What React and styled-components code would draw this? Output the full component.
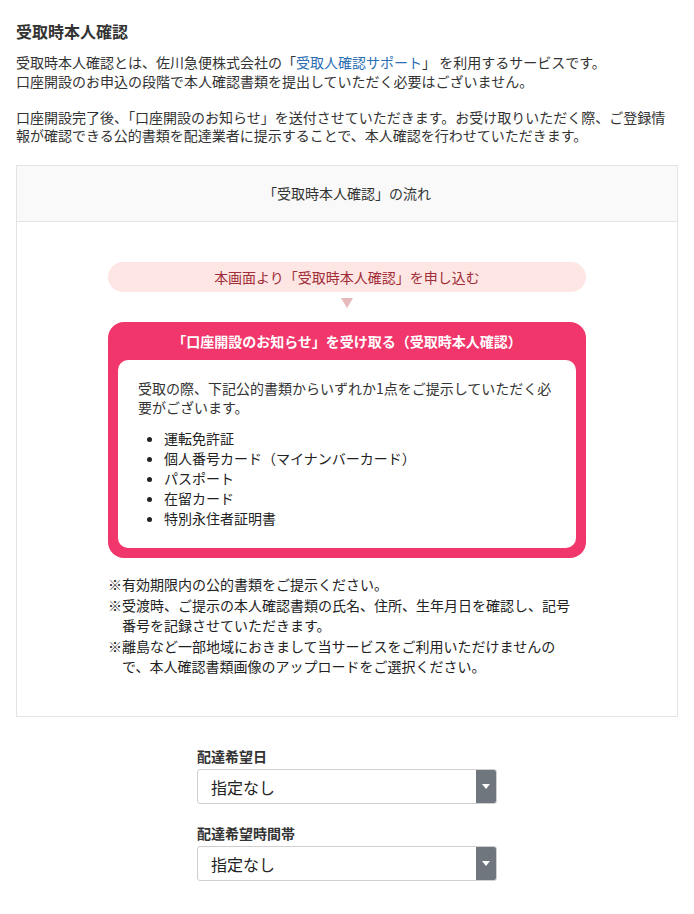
import React from "react";
import styled, { createGlobalStyle } from "styled-components";

const GlobalStyle = createGlobalStyle`
  html, body { margin: 0; padding: 0; background: #fff; }
  body {
    font-family: "Noto Sans CJK JP", "Noto Sans", sans-serif;
    color: #333;
    font-size: 14px;
  }
  * { box-sizing: border-box; }
`;

const Page = styled.div`
  padding: 19px 16px 40px;
`;

const Title = styled.h2`
  margin: 0 0 10px;
  font-size: 16px;
  line-height: 24px;
  font-weight: 700;
  color: #333;
`;

const Para = styled.p`
  margin: 0 0 17.5px;
  font-size: 14px;
  line-height: 18.5px;
  &:last-of-type { margin-bottom: 20px; }
`;

const Link = styled.a`
  color: #2b6fb3;
  text-decoration: none;
`;

const FlowBox = styled.section`
  border: 1px solid #e4e4e4;
`;

const FlowHeader = styled.div`
  height: 56px;
  display: flex;
  align-items: center;
  justify-content: center;
  background: #f9f9f9;
  border-bottom: 1px solid #e4e4e4;
  font-size: 14px;
`;

const FlowBody = styled.div`
  padding: 40px 0 40px;
`;

const Column = styled.div`
  width: 478px;
  margin: 0 auto;
`;

const Pill = styled.div`
  height: 30px;
  border-radius: 15px;
  background: #fde6e3;
  color: #a12d38;
  display: flex;
  align-items: center;
  justify-content: center;
  font-size: 14px;
`;

const ArrowDown = styled.div`
  width: 0;
  height: 0;
  margin: 6px auto 14px;
  border-left: 6px solid transparent;
  border-right: 6px solid transparent;
  border-top: 10px solid #e8b9ba;
`;

const StepCard = styled.div`
  background: #f1366b;
  border-radius: 16px;
  padding: 0 10px 10px;
`;

const StepTitle = styled.div`
  height: 38px;
  display: flex;
  align-items: center;
  justify-content: center;
  color: #fff;
  font-weight: 700;
  font-size: 14px;
`;

const StepInner = styled.div`
  background: #fff;
  border-radius: 10px;
  padding: 19px 20px 20px;
`;

const InnerText = styled.p`
  margin: 0;
  font-size: 14px;
  line-height: 19px;
`;

const DocList = styled.ul`
  margin: 11px 0 0;
  padding-left: 26px;
  list-style: disc;
  color: #222;
`;

const DocItem = styled.li`
  font-size: 14px;
  line-height: 20px;
`;

const Notes = styled.ul`
  list-style: none;
  margin: 17px 0 0;
  padding: 0 4px 0 0;
  display: flex;
  flex-direction: column;
  gap: 2px;
  color: #222;
`;

const Note = styled.li`
  font-size: 14px;
  line-height: 19.5px;
  padding-left: 1em;
  text-indent: -1em;
`;

const Form = styled.div`
  width: 300px;
  margin: 29px auto 0;
  display: flex;
  flex-direction: column;
`;

const Label = styled.label`
  display: block;
  font-size: 14px;
  line-height: 20px;
  font-weight: 700;
  color: #333;
  margin: ${(p) => (p.$first ? "0" : "19px")} 0 3px;
`;

const SelectWrap = styled.div`
  display: flex;
  height: 35px;
  border: 1px solid #cfcfcf;
  border-radius: 3px;
  overflow: hidden;
  background: #fff;
`;

const Select = styled.select`
  flex: 1;
  appearance: none;
  -webkit-appearance: none;
  border: none;
  outline: none;
  background: transparent;
  font-family: "Noto Sans CJK JP", "Noto Sans", sans-serif;
  font-size: 16px;
  color: #222;
  padding: 0 0 0 13px;
`;

const SelectArrow = styled.span`
  width: 20px;
  background: #6f767d;
  display: flex;
  align-items: center;
  justify-content: center;
  &::after {
    content: "";
    width: 0;
    height: 0;
    border-left: 4px solid transparent;
    border-right: 4px solid transparent;
    border-top: 5px solid #fff;
  }
`;

const docs = [
  "運転免許証",
  "個人番号カード（マイナンバーカード）",
  "パスポート",
  "在留カード",
  "特別永住者証明書",
];

const notes = [
  "※有効期限内の公的書類をご提示ください。",
  "※受渡時、ご提示の本人確認書類の氏名、住所、生年月日を確認し、記号番号を記録させていただきます。",
  "※離島など一部地域におきまして当サービスをご利用いただけませんので、本人確認書類画像のアップロードをご選択ください。",
];

function DeliverySelect({ id, label, first }) {
  return (
    <>
      <Label htmlFor={id} $first={first}>{label}</Label>
      <SelectWrap>
        <Select id={id} defaultValue="none">
          <option value="none">指定なし</option>
        </Select>
        <SelectArrow />
      </SelectWrap>
    </>
  );
}

export default function App() {
  return (
    <>
      <GlobalStyle />
      <Page>
        <Title>受取時本人確認</Title>
        <Para>
          受取時本人確認とは、佐川急便株式会社の「<Link href="#">受取人確認サポート</Link>」 を利用するサービスです。
          <br />
          口座開設のお申込の段階で本人確認書類を提出していただく必要はございません。
        </Para>
        <Para>
          口座開設完了後、「口座開設のお知らせ」を送付させていただきます。お受け取りいただく際、ご登録情報が確認できる公的書類を配達業者に提示することで、本人確認を行わせていただきます。
        </Para>

        <FlowBox>
          <FlowHeader>「受取時本人確認」の流れ</FlowHeader>
          <FlowBody>
            <Column>
              <Pill>本画面より「受取時本人確認」を申し込む</Pill>
              <ArrowDown />
              <StepCard>
                <StepTitle>「口座開設のお知らせ」を受け取る（受取時本人確認）</StepTitle>
                <StepInner>
                  <InnerText>
                    受取の際、下記公的書類からいずれか1点をご提示していただく必要がございます。
                  </InnerText>
                  <DocList>
                    {docs.map((d) => (
                      <DocItem key={d}>{d}</DocItem>
                    ))}
                  </DocList>
                </StepInner>
              </StepCard>
              <Notes>
                {notes.map((n) => (
                  <Note key={n}>{n}</Note>
                ))}
              </Notes>
            </Column>
          </FlowBody>
        </FlowBox>

        <Form>
          <DeliverySelect id="date" label="配達希望日" first />
          <DeliverySelect id="time" label="配達希望時間帯" />
        </Form>
      </Page>
    </>
  );
}
